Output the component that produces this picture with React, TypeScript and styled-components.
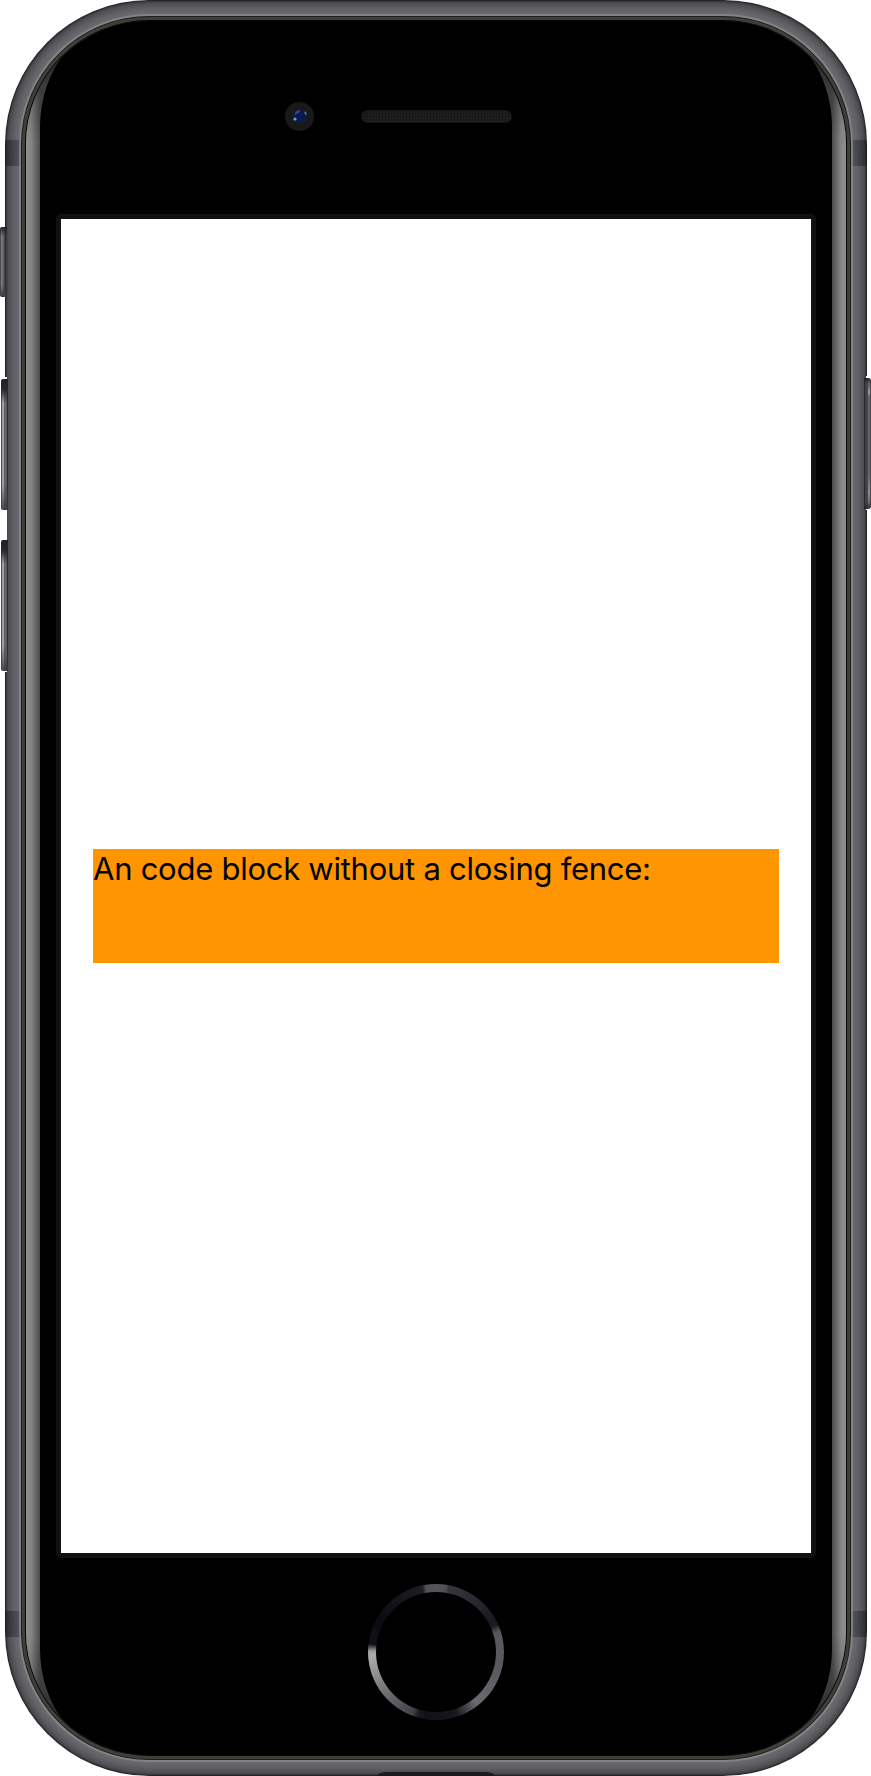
import React from "react";
import styled, { createGlobalStyle } from "styled-components";

const GlobalStyle = createGlobalStyle`
  body { margin: 0; background: #fff; overflow: hidden; }
  *, *::before, *::after { box-sizing: border-box; }
`;

const Device = styled.main`
  display: flex;
  width: 871px;
  height: 1776px;
`;

const Rail = styled.div<{ $width: number; $top: number; $gap: number }>`
  position: relative;
  z-index: 1;
  flex: none;
  width: ${(p) => p.$width}px;
  padding-top: ${(p) => p.$top}px;
  display: flex;
  flex-direction: column;
  gap: ${(p) => p.$gap}px;
`;

/* The frame is milled back slightly around the longer buttons. */
const Recess = styled.div<{ $side: "left" | "right" }>`
  display: flex;
  flex-direction: column;
  flex: none;
  gap: 30px;
  width: ${(p) => (p.$side === "left" ? 7 : 6)}px;
  padding: 2px 0 1px ${(p) => (p.$side === "left" ? 1 : 0)}px;
  margin-left: ${(p) => (p.$side === "left" ? 0 : -1)}px;
  background: #fff;
`;

const MuteSwitch = styled.div`
  flex: none;
  width: 7px;
  height: 70px;
  border-radius: 2px 0 0 2px;
  background:
    linear-gradient(#232428 0, transparent 9px, transparent 58px, #3a3c40 100%),
    linear-gradient(90deg, #4b4c50 1px, #7b7b80 1px, #77777c 2px, #55555a 4px, #303135 5px, #39393d);
`;

const VolumeButton = styled.div`
  flex: none;
  width: 7px;
  height: 131px;
  border-radius: 2px 0 0 2px;
  background:
    linear-gradient(#222326 0, #26272a 10px, transparent 24px, transparent 105px, rgba(55, 57, 62, 0.85) 100%),
    linear-gradient(90deg, #4b4e52 1px, #9da1a6 1px, #9da1a6 3px, #65656c 3px, #5f5e65 6px, #2c2c2f 6px);
`;

const PowerButton = styled.div`
  flex: none;
  width: 7px;
  height: 131px;
  margin-left: -2px;
  border-radius: 0 3px 3px 0;
  background:
    linear-gradient(rgba(28, 29, 33, 0.9) 0, transparent 6px, transparent 124px, rgba(40, 40, 44, 0.9) 100%),
    linear-gradient(transparent 8px, rgba(190, 190, 196, 0.6) 14px, transparent 19px, transparent 98px, rgba(170, 170, 176, 0.6) 114px, transparent 126px) 4px 0 / 2px 100% no-repeat,
    linear-gradient(90deg, #28292d 1px, #3b3e43 1px, #45484d 4px, #6b6a71 4px, #626168 6px, #4a4a4f 6px);
`;

const Chassis = styled.div`
  position: relative;
  flex: none;
  width: 862px;
  height: 1776px;
  padding: 16px;
  border-radius: 144px;
  overflow: hidden;
  background:
    linear-gradient(90deg, #3b3e43, #54575d) 0 140px / 16px 26px no-repeat,
    linear-gradient(270deg, #3b3e43, #54575d) 100% 140px / 16px 26px no-repeat,
    linear-gradient(90deg, #3b3e43, #54575d) 0 1611px / 16px 26px no-repeat,
    linear-gradient(270deg, #3b3e43, #54575d) 100% 1611px / 16px 26px no-repeat,
    #6d6c71;
  box-shadow: inset 0 0 2px 1px #1b1b1d, inset 0 0 13px 3px rgba(34, 34, 37, 0.85);
`;

const Port = styled.i`
  position: absolute;
  left: 372px;
  bottom: 0;
  width: 118px;
  height: 4px;
  border-radius: 10px 10px 0 0 / 4px 4px 0 0;
  background: #1b1b1d;
`;

const Rim = styled.div`
  height: 1744px;
  padding: 4px;
  border-radius: 128px;
  border: 1px solid #1f1f1e;
  background: #3f3f39;
  box-shadow: 0 0 0 2px rgba(140, 139, 146, 0.75);
`;

const Bevel = styled.div`
  position: relative;
  height: 1734px;
  border-radius: 123px;
  background: linear-gradient(90deg, #8f8f8f, #858585 5px, #4b4b4b 14px, #4b4b4b calc(100% - 14px), #858585 calc(100% - 5px), #8f8f8f);
  box-shadow: 0 0 0 1px #050505;
  overflow: hidden;
`;

const Glass = styled.div`
  height: 100%;
  padding: 0 14px;
  background: linear-gradient(#000 0, rgba(0, 0, 0, 0.8) 12px, rgba(0, 0, 0, 0.5) 36px, rgba(0, 0, 0, 0.2) 66px, transparent 120px, transparent calc(100% - 120px), rgba(0, 0, 0, 0.2) calc(100% - 66px), rgba(0, 0, 0, 0.5) calc(100% - 36px), rgba(0, 0, 0, 0.8) calc(100% - 12px), #000 100%);
`;

const Face = styled.div`
  height: 100%;
  display: flex;
  flex-direction: column;
  align-items: center;
  background: #000;
  border-radius: 88px / 106px;
`;

const TopBezel = styled.header`
  width: 100%;
  height: 193px;
  flex: none;
  display: flex;
  align-items: center;
  gap: 47px;
  padding: 0 0 2px 245px;
`;

const Camera = styled.svg`
  display: block;
  flex: none;
`;

const Speaker = styled.div`
  width: 151px;
  height: 13px;
  border-radius: 7px;
  background:
    repeating-linear-gradient(90deg, rgba(0, 0, 0, 0.16) 0 1px, transparent 1px 3px),
    repeating-linear-gradient(rgba(0, 0, 0, 0.16) 0 1px, transparent 1px 3px),
    #1f1f1f;
  box-shadow: inset 0 0 3px #111;
`;

const Screen = styled.section`
  width: 760px;
  height: 1344px;
  flex: none;
  border: 5px solid #111;
  border-radius: 5px;
  padding: 40px 32px 0;
  display: flex;
  align-items: center;
  background: #fff padding-box;
`;

const CodeBlock = styled.div`
  width: 686px;
  height: 114px;
  background: #ff9500;
  color: #000;
  font: 400 31px/40px Inter, sans-serif;
  letter-spacing: -0.26px;
  white-space: nowrap;
`;

const HomeButton = styled.div`
  width: 136px;
  height: 136px;
  flex: none;
  margin-top: 26px;
  padding: 8px;
  border-radius: 50%;
  background: conic-gradient(#565559 0deg, #515055 9deg, #38373c 11deg, #2b2a30 35deg, #18181d 63deg, #1c1c21 66deg, #58575e 72deg, #5b5a61 110deg, #6b6a70 142deg, #45444a 151deg, #17181d 162deg, #111218 190deg, #1c1c22 196deg, #424147 201deg, #66656a 225deg, #888 245deg, #adadad 268deg, #999 271deg, #111116 277deg, #0b0b12 300deg, #18181d 335deg, #1e1e22 348deg, #515055 351deg, #565559 360deg);
  &::before {
    content: "";
    display: block;
    height: 100%;
    border-radius: 50%;
    background: #000;
  }
`;

export default function App() {
  return (
    <>
      <GlobalStyle />
      <Device>
        <Rail $width={5} $top={227} $gap={80}>
          <MuteSwitch />
          <Recess $side="left">
            <VolumeButton />
            <VolumeButton />
          </Recess>
        </Rail>
        <Chassis>
          <Port />
          <Rim>
            <Bevel>
              <Glass>
                <Face>
                  <TopBezel>
                    <Camera width="29" height="29" viewBox="0 0 29 29">
                      <circle cx="14.5" cy="14.5" r="14.5" fill="#191919" />
                      <circle cx="14.5" cy="14.5" r="7.6" fill="#151b32" />
                      <circle cx="15" cy="15" r="5" fill="#081b55" />
                      <path d="M9.5 12q2-4 6-4l-2 3q-2 0-3 2z" fill="#2d4d9e" />
                      <circle cx="10" cy="17" r="1.6" fill="#8097b5" />
                      <ellipse cx="20.5" cy="11.2" rx="1" ry="1.8" fill="#477799" transform="rotate(-20 20.5 11.2)" />
                    </Camera>
                    <Speaker />
                  </TopBezel>
                  <Screen>
                    <CodeBlock>An code block without a closing fence:</CodeBlock>
                  </Screen>
                  <HomeButton />
                </Face>
              </Glass>
            </Bevel>
          </Rim>
        </Chassis>
        <Rail $width={4} $top={376} $gap={0}>
          <Recess $side="right">
            <PowerButton />
          </Recess>
        </Rail>
      </Device>
    </>
  );
}
